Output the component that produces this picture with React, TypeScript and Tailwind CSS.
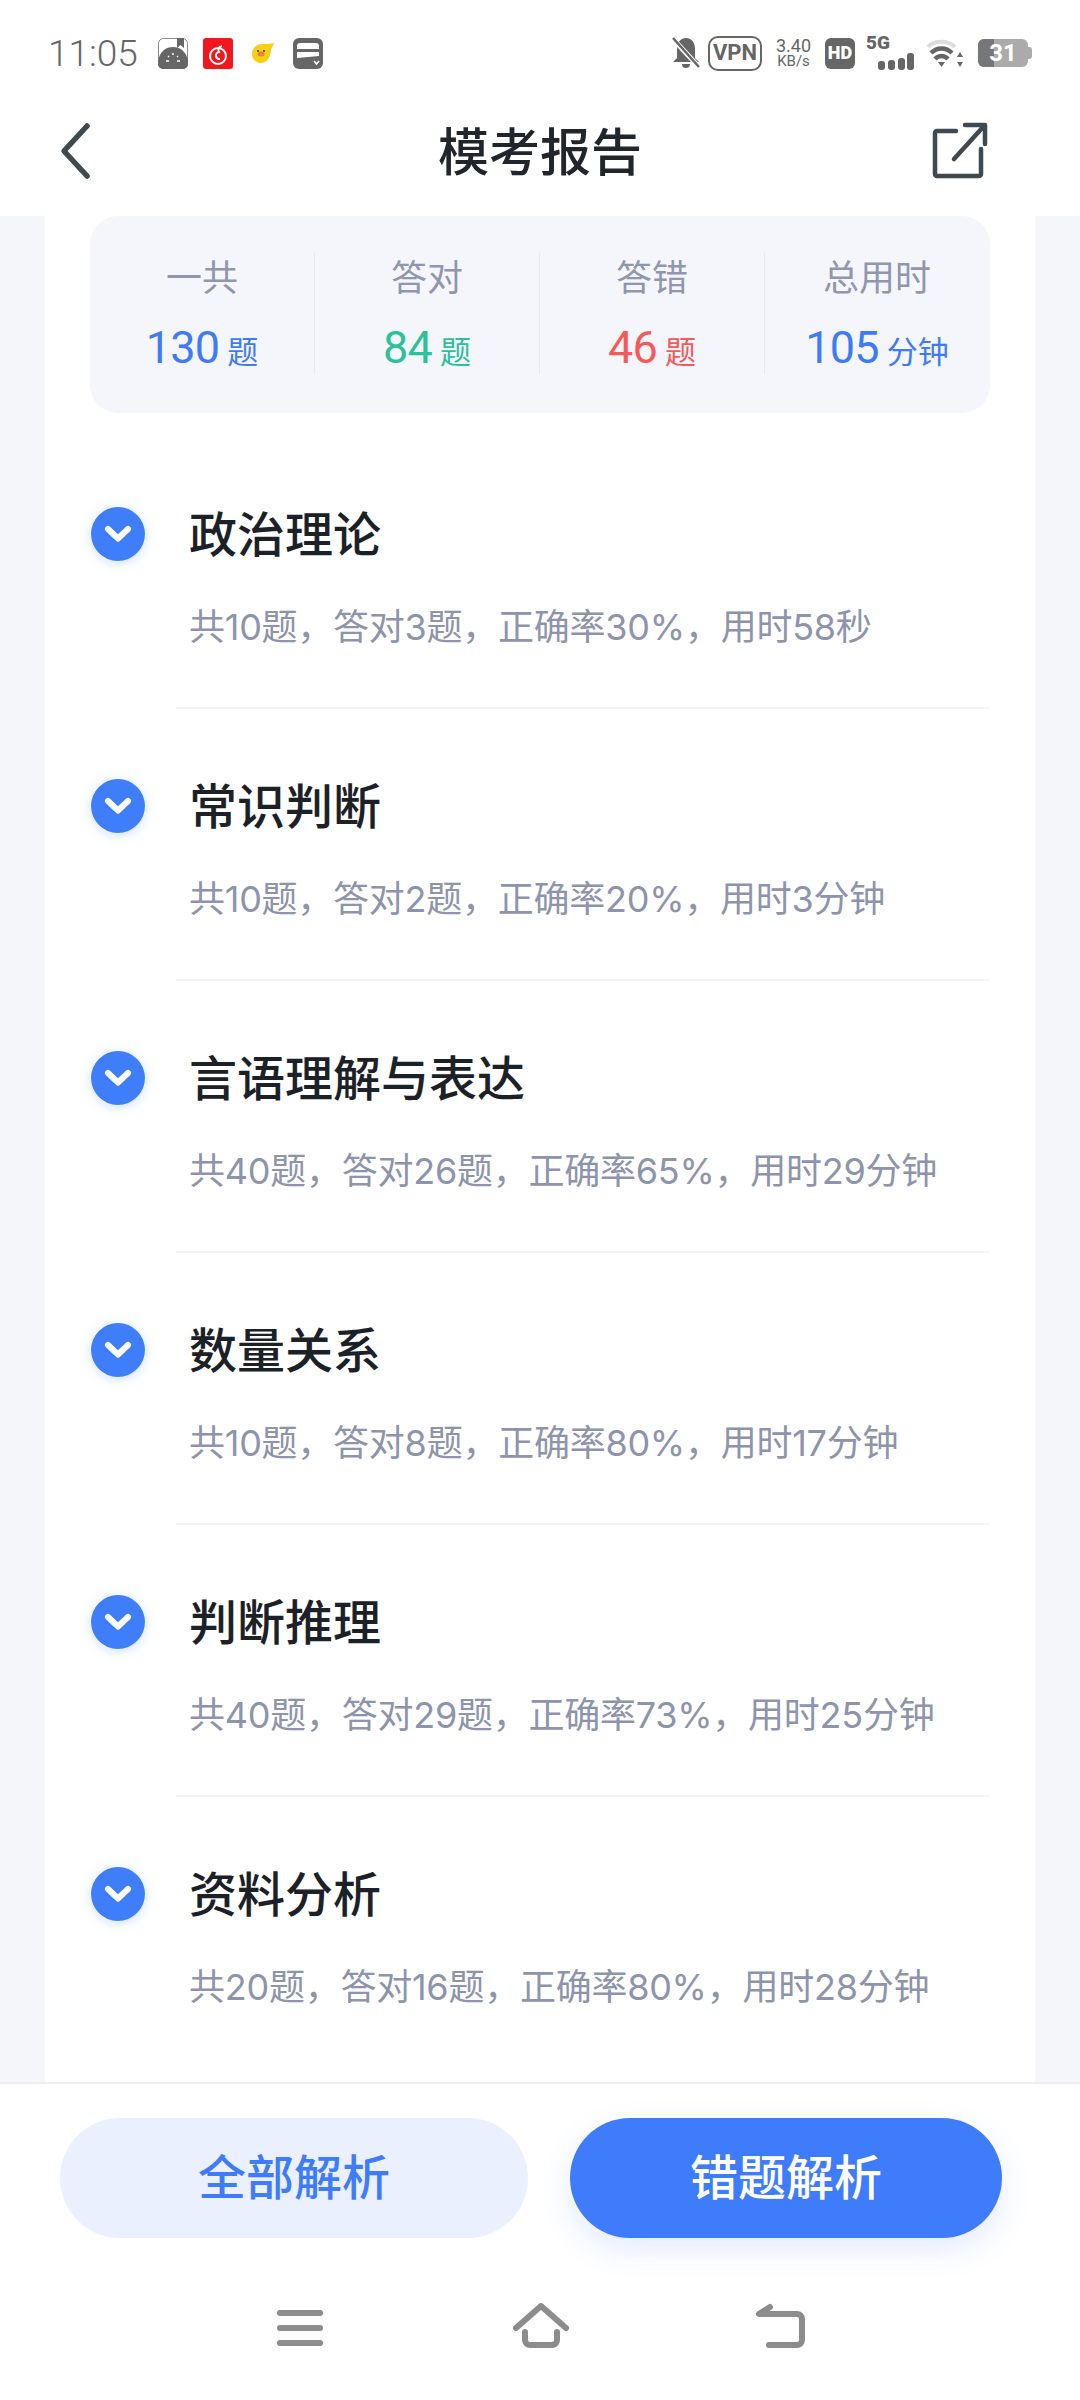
import React from "react";

const stats = [
  { label: "一共", value: "130", unit: "题", color: "text-[#3f7bf6]" },
  { label: "答对", value: "84", unit: "题", color: "text-[#2cc09b]" },
  { label: "答错", value: "46", unit: "题", color: "text-[#f55a5a]" },
  { label: "总用时", value: "105", unit: "分钟", color: "text-[#3f7bf6]" },
];

const sections = [
  { title: "政治理论", detail: "共10题，答对3题，正确率30%，用时58秒" },
  { title: "常识判断", detail: "共10题，答对2题，正确率20%，用时3分钟" },
  { title: "言语理解与表达", detail: "共40题，答对26题，正确率65%，用时29分钟" },
  { title: "数量关系", detail: "共10题，答对8题，正确率80%，用时17分钟" },
  { title: "判断推理", detail: "共40题，答对29题，正确率73%，用时25分钟" },
  { title: "资料分析", detail: "共20题，答对16题，正确率80%，用时28分钟" },
];

const font = "font-['Inter','Noto_Sans_CJK_SC',sans-serif]";

const StatusLeft = () => (
  <div className="flex items-center">
    <span className="w-[87px] font-['Roboto',sans-serif] text-[37px] leading-none font-light text-[#666]">11:05</span>
    <svg className="ml-[23px]" width="30" height="31" viewBox="0 0 30 31">
      <rect x="0.5" y="0.5" width="29" height="30" rx="5" fill="#fff" stroke="#888" />
      <path d="M19 0h7v10l-3.500-3-3.500 3z" fill="#666" />
      <path d="M0 23C2 13 8 9 15 9s13 4 15 14v3a5 5 0 0 1-5 5H5a5 5 0 0 1-5-5z" fill="#666" />
      <path d="M8 23h3M19 23h3M10 18l1 1M19 19l1-1M15 15v2" stroke="#fff" strokeWidth="1.500" />
    </svg>
    <svg className="ml-[15px]" width="30" height="31" viewBox="0 0 30 31">
      <rect width="30" height="31" rx="3" fill="#f3161c" />
      <circle cx="15" cy="18" r="8" fill="none" stroke="#fff" strokeWidth="2" />
      <path d="M17 21a3.500 3.500 0 1 1-1-7c-1-2-1-5 3-6" fill="none" stroke="#fff" strokeWidth="2" />
    </svg>
    <svg className="ml-[19px]" width="22" height="20" viewBox="0 0 22 20">
      <path d="M0 11C0 5 5 1 10 1c4 0 8 0 12-1-1 3-2 5-3 6 0 8-4 14-10 14C4 20 0 16 0 11z" fill="#f9cf10" />
      <circle cx="6" cy="8" r="1" fill="#333" />
      <circle cx="12" cy="8" r="1" fill="#333" />
      <ellipse cx="9" cy="11" rx="3.500" ry="2.500" fill="#e8843a" />
    </svg>
    <svg className="ml-[19px]" width="30" height="31" viewBox="0 0 30 31">
      <rect width="30" height="31" rx="6" fill="#666" />
      <path d="M4 11V8a3 3 0 0 1 3-3h16a3 3 0 0 1 3 3v3zM4 14h22v4L4 20z" fill="#fff" />
      <path d="M21 23l2.500 3 2.500-3" fill="none" stroke="#fff" strokeWidth="1.500" />
    </svg>
  </div>
);

const StatusRight = () => (
  <div className="flex items-center font-['Roboto',sans-serif] text-[#666]">
    <svg width="28" height="32" viewBox="0 0 28 32">
      <path d="M14 1c6 0 9 5 9 11v9l4 4H1l4-4v-9C5 6 8 1 14 1zM10 27h8a4 4 0 0 1-8 0z" fill="#666" />
      <path d="M1 2l26 28" stroke="#fff" strokeWidth="5" />
      <path d="M1 1l26 29" stroke="#666" strokeWidth="2.500" />
    </svg>
    <span className="ml-[8px] flex h-[35px] w-[54px] items-center justify-center rounded-[10px] border-[2.500px] border-[#666] text-[22px] leading-none font-bold">
      VPN
    </span>
    <span className="ml-[12px] flex w-[39px] flex-col items-center">
      <span className="text-[18px] leading-[17px]">3.40</span>
      <span className="text-[15px] leading-[15px]">KB/s</span>
    </span>
    <span className="ml-[12px] flex h-[31px] w-[30px] items-center justify-center rounded-[6px] bg-[#666] text-[18px] leading-none font-black text-white">
      HD
    </span>
    <span className="relative ml-[11px] h-[34px] w-[48px]">
      <span className="absolute -top-[2px] left-0 text-[19px] leading-[18px] font-black">5G</span>
      <svg className="absolute right-0 bottom-0" width="36" height="17" viewBox="0 0 36 17">
        <rect x="0" y="8" width="7" height="9" rx="3" fill="#666" />
        <rect x="10" y="7" width="7" height="10" rx="3" fill="#666" />
        <rect x="20" y="5" width="7" height="12" rx="3" fill="#666" />
        <rect x="29" y="0" width="7" height="17" rx="3" fill="#666" />
      </svg>
    </span>
    <svg className="ml-[13px]" width="37" height="29" viewBox="0 0 37 29">
      <path d="M1 8C7 1 21 1 28 8" fill="none" stroke="#ddd" strokeWidth="4" />
      <path d="M4 14c6-6 15-6 21 0" fill="none" stroke="#666" strokeWidth="4.500" />
      <path d="M8 20c4-4 9-4 13 0" fill="none" stroke="#666" strokeWidth="4.500" />
      <path d="M11 23h7l-3.500 5z" fill="#666" />
      <path d="M33 13l3 5h-6zM33 28l-3-5h6z" fill="#666" />
    </svg>
    <span className="ml-[14px] flex items-center">
      <span className="relative flex h-[28px] w-[50px] items-center justify-center overflow-hidden rounded-[6px] bg-[#ababab] text-[24px] leading-none font-bold text-white">
        <span className="absolute inset-y-0 left-0 w-[16px] bg-[#777]" />
        <span className="relative">31</span>
      </span>
      <span className="h-[12px] w-[4px] rounded-r-[3px] bg-[#ababab]" />
    </span>
  </div>
);

const Chevron = () => (
  <span className="flex h-[54px] w-[54px] shrink-0 items-center justify-center rounded-full bg-[#3f7efb] shadow-[0_2px_12px_rgba(63,126,251,0.25)]">
    <svg width="28" height="18" viewBox="0 0 28 18">
      <path d="M4 4l10 9.500L24 4" fill="none" stroke="#fff" strokeWidth="6" strokeLinecap="round" strokeLinejoin="round" />
    </svg>
  </span>
);

export default function App() {
  return (
    <div className={`flex h-[2400px] w-[1080px] flex-col overflow-hidden bg-white ${font}`}>
      <header className="h-[216px] shrink-0 bg-white">
        <div className="flex h-[108px] items-center justify-between pr-[48px] pl-[48px] pb-[2px]">
          <StatusLeft />
          <StatusRight />
        </div>
        <div className="relative flex h-[88px] items-center justify-center">
          <svg className="absolute top-[14px] left-[58px]" width="34" height="58" viewBox="0 0 34 58">
            <path d="M29 4L6 29l23 25" fill="none" stroke="#3d4a52" strokeWidth="5.500" strokeLinecap="round" strokeLinejoin="round" />
          </svg>
          <h1 className="text-[51px] leading-none font-medium text-[#20262c]">模考报告</h1>
          <svg className="absolute top-[14px] right-[92px]" width="56" height="57" viewBox="0 0 56 57">
            <path d="M24 9H5a2 2 0 0 0-2 2v41a2 2 0 0 0 2 2h42a2 2 0 0 0 2-2V27" fill="none" stroke="#3d4a52" strokeWidth="4.500" strokeLinecap="round" />
            <path d="M22 37L52 4M33 3h20v19" fill="none" stroke="#3d4a52" strokeWidth="4.500" strokeLinecap="round" strokeLinejoin="round" />
          </svg>
        </div>
      </header>

      <main className="min-h-0 flex-1 overflow-hidden bg-[#f4f6fa] px-[45px]">
        <div className="h-full bg-white px-[45px]">
          <section className="flex h-[197px] rounded-[28px] bg-[#f5f6fb] pt-[36px]">
            {stats.map((stat, i) => (
              <div
                key={stat.label}
                className={`flex h-[122px] flex-col items-center ${i > 0 ? "w-[225px] border-l border-[#e8eaf0]" : "w-[224px]"}`}
              >
                <span className="mt-[1px] text-[36px] leading-[50px] text-[#8f96ae]">{stat.label}</span>
                <span className={`mt-[19px] flex items-baseline leading-[52px] ${stat.color}`}>
                  <span className="font-['Roboto',sans-serif] text-[45px] tracking-[-0.800px]">{stat.value}</span>
                  <span className="ml-[8px] text-[31px]">{stat.unit}</span>
                </span>
              </div>
            ))}
          </section>

          <div className="pt-[24px]">
            {sections.map((section, i) => (
              <div key={section.title} className="flex h-[272px] flex-col pt-[49px]">
                <div className="flex h-[96px] items-center pl-[1px]">
                  <Chevron />
                  <h2 className="mt-[2px] ml-[44px] text-[48px] leading-none font-medium text-[#1c2127]">{section.title}</h2>
                </div>
                <p className="mt-[21px] ml-[99px] text-[36px] leading-[48px] tracking-[-0.250px] whitespace-nowrap text-[#8d94ab]">
                  {section.detail}
                </p>
                {i < sections.length - 1 && <div className="mt-auto ml-[86px] h-[2px] shrink-0 bg-[#f3f4f7]" />}
              </div>
            ))}
          </div>
        </div>
      </main>

      <footer className="h-[318px] shrink-0 border-t-2 border-[#eeeef0] bg-white">
        <div className="flex gap-[42px] pt-[34px] pl-[60px]">
          <button className="flex h-[120px] w-[468px] items-center justify-center rounded-full bg-[#eaf0fe] text-[48px] font-medium text-[#3f7cfb]">
            全部解析
          </button>
          <button className="flex h-[120px] w-[432px] items-center justify-center rounded-full bg-[#3f7cfb] text-[48px] font-medium text-white shadow-[0_12px_30px_rgba(63,124,251,0.15)]">
            错题解析
          </button>
        </div>
        <nav className="mt-[72px] flex items-start pl-[277px]">
          <svg width="46" height="38" viewBox="0 0 46 38">
            <path d="M3 6h40M3 21h40M3 36h40" stroke="#8c8c8c" strokeWidth="6" strokeLinecap="round" transform="translate(0 -3)" />
          </svg>
          <svg className="ml-[189px] -mt-[7px]" width="58" height="45" viewBox="0 0 58 45">
            <path d="M4 25L29 3l25 22" fill="none" stroke="#8c8c8c" strokeWidth="6" strokeLinecap="round" strokeLinejoin="round" />
            <path d="M13 29v8a5 5 0 0 0 5 5h22a5 5 0 0 0 5-5v-8" fill="none" stroke="#8c8c8c" strokeWidth="6" strokeLinecap="round" />
          </svg>
          <svg className="ml-[186px] -mt-[7px]" width="50" height="45" viewBox="0 0 50 45">
            <path d="M14 4L3 11h38a5 5 0 0 1 5 5v21a5 5 0 0 1-5 5H13" fill="none" stroke="#8c8c8c" strokeWidth="6" strokeLinecap="round" strokeLinejoin="round" />
          </svg>
        </nav>
      </footer>
    </div>
  );
}
